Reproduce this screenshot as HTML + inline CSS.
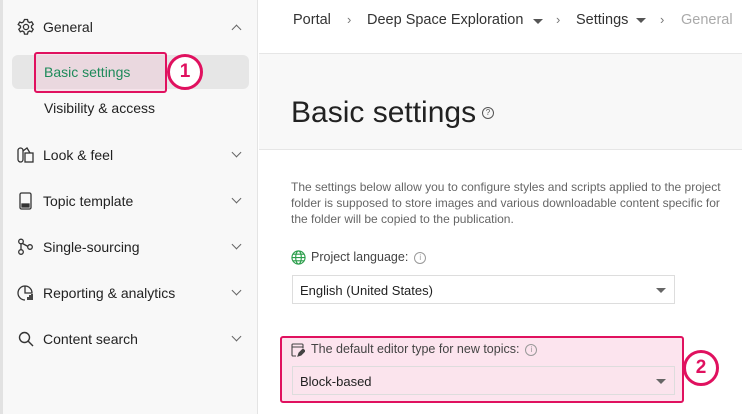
<!DOCTYPE html><html><head><style>
body{margin:0;width:742px;height:414px;overflow:hidden;font-family:"Liberation Sans",sans-serif;background:#fff;position:relative;color:#222}
.a{position:absolute;white-space:nowrap}
.side{position:absolute;left:0;top:0;width:258px;height:414px;background:#f8f8f8;border-right:1px solid #e4e4e4;border-left:3px solid #e2e2e2;box-sizing:border-box}
.it{position:absolute;left:43px;font-size:14px;color:#222}
.ch{position:absolute;left:233px;width:6px;height:6px;border-right:1.3px solid #666;border-bottom:1.3px solid #666;transform:rotate(45deg)}
.ic{position:absolute;left:17px}
.sel{position:absolute;left:292px;width:383px;height:29px;border:1px solid #ddd;background:#fff;box-sizing:border-box;font-size:13px;padding:7px 0 0 7px}
.tri{position:absolute;right:8px;top:12px;border-left:5px solid transparent;border-right:5px solid transparent;border-top:5px solid #666}
.circ{position:absolute;width:30px;height:30px;border:3px solid #e0115f;border-radius:50%;background:#fff;font-weight:bold;font-size:19px;text-align:center;line-height:30px;color:#e0115f}
.inf{display:inline-block;vertical-align:1px;margin-left:6px;width:10px;height:10px;border:1px solid #999;border-radius:50%;font-size:8px;text-align:center;line-height:10px;color:#999}
</style></head><body>
<div class="side"></div>
<svg class="ic" style="top:18px" width="18" height="18" viewBox="0 0 18 18" fill="none" stroke="#333" stroke-width="1.3"><circle cx="9" cy="9" r="2.6"/><path d="M7.5 1.5h3l.5 2.2 1.6.9 2.1-.8 1.5 2.6-1.7 1.5v1.8l1.7 1.5-1.5 2.6-2.1-.8-1.6.9-.5 2.2h-3l-.5-2.2-1.6-.9-2.1.8-1.5-2.6 1.7-1.5V8.1L1.2 6.6l1.5-2.6 2.1.8 1.6-.9z"/></svg>
<div class="it" style="top:19px">General</div>
<div class="ch" style="top:26px;transform:rotate(225deg)"></div>
<div class="a" style="left:12px;top:55px;width:237px;height:34px;background:#e6e6e6;border-radius:6px"></div>
<div class="a" style="left:34px;top:52px;width:129px;height:37px;border:2px solid #e0115f;border-radius:3px;background:rgba(240,190,210,.35)"></div>
<div class="it" style="left:44px;top:64px;color:#1e8a5a">Basic settings</div>
<div class="circ" style="left:167px;top:54px">1</div>
<div class="it" style="left:44px;top:100px">Visibility &amp; access</div>
<svg class="ic" style="top:146px" width="18" height="18" viewBox="0 0 18 18" fill="none" stroke="#333" stroke-width="1.3"><rect x="1" y="2" width="5" height="14" rx="2.5"/><rect x="8" y="7" width="8" height="9"/><path d="M6 5l4-3 3 5"/></svg>
<div class="it" style="top:147px">Look &amp; feel</div><div class="ch" style="top:149px"></div>
<svg class="ic" style="top:192px" width="18" height="18" viewBox="0 0 18 18" fill="none" stroke="#333" stroke-width="1.3"><rect x="3" y="1" width="11" height="16" rx="1.5"/><rect x="5" y="12" width="7" height="3" fill="#333"/></svg>
<div class="it" style="top:193px">Topic template</div><div class="ch" style="top:195px"></div>
<svg class="ic" style="top:238px" width="18" height="18" viewBox="0 0 18 18" fill="none" stroke="#333" stroke-width="1.3"><circle cx="4" cy="3.5" r="2.3"/><circle cx="4" cy="14" r="2.3"/><circle cx="13" cy="9" r="2.3"/><path d="M4 6v5.5M5.5 5.5l5.5 3"/></svg>
<div class="it" style="top:239px">Single-sourcing</div><div class="ch" style="top:241px"></div>
<svg class="ic" style="top:284px" width="18" height="18" viewBox="0 0 18 18" fill="none" stroke="#333" stroke-width="1.3"><path d="M8 2a7 7 0 1 0 0 14M8 2v7h7a7 7 0 0 0-7-7"/><path d="M11 16v-3M13 16v-5M15 16v-6" stroke-width="1.8"/></svg>
<div class="it" style="top:285px">Reporting &amp; analytics</div><div class="ch" style="top:287px"></div>
<svg class="ic" style="top:330px" width="18" height="18" viewBox="0 0 18 18" fill="none" stroke="#333" stroke-width="1.4"><circle cx="7.5" cy="7.5" r="5"/><path d="M11 11l5 5"/></svg>
<div class="it" style="top:331px">Content search</div><div class="ch" style="top:333px"></div>

<div class="a" style="left:259px;top:0;width:483px;height:53px;border-bottom:1px solid #e6e6e6;background:#fff"></div>
<div class="a" style="left:293px;top:12px;font-size:14.5px;color:#333">Portal</div>
<div class="a" style="left:347px;top:12px;font-size:13px;color:#777">›</div>
<div class="a" style="left:367px;top:12px;font-size:14.5px;color:#333">Deep Space Exploration</div>
<div class="a" style="left:533px;top:19px;border-left:5px solid transparent;border-right:5px solid transparent;border-top:5px solid #555"></div>
<div class="a" style="left:556px;top:12px;font-size:13px;color:#777">›</div>
<div class="a" style="left:576px;top:12px;font-size:14.5px;color:#333">Settings</div>
<div class="a" style="left:636px;top:18px;border-left:5px solid transparent;border-right:5px solid transparent;border-top:5px solid #555"></div>
<div class="a" style="left:660px;top:12px;font-size:13px;color:#777">›</div>
<div class="a" style="left:681px;top:12px;font-size:14.5px;color:#aaa">General</div>
<div class="a" style="left:259px;top:54px;width:483px;height:95px;background:#f8f8f8;border-bottom:1px solid #e6e6e6"></div>
<div class="a" style="left:291px;top:96px;font-size:30px;color:#222">Basic settings</div>
<div class="a" style="left:482px;top:107px;width:10px;height:10px;border:1px solid #555;border-radius:50%;font-size:8px;text-align:center;line-height:10px;color:#555">?</div>
<div class="a" style="left:291px;top:179px;font-size:12px;color:#666;line-height:16px">The settings below allow you to configure styles and scripts applied to the project<br>folder is supposed to store images and various downloadable content specific for<br>the folder will be copied to the publication.</div>
<svg class="a" style="left:291px;top:250px" width="15" height="15" viewBox="0 0 16 16" fill="none" stroke="#2a9d4a" stroke-width="1.2"><circle cx="8" cy="8" r="7"/><ellipse cx="8" cy="8" rx="3" ry="7"/><path d="M1 8h14M2 4.5h12M2 11.5h12"/></svg>
<div class="a" style="left:311px;top:250px;font-size:12.5px;color:#444">Project language:<span class="inf">i</span></div>
<div class="sel" style="top:275px">English (United States)<div class="tri"></div></div>
<div class="a" style="left:280px;top:336px;width:400px;height:63px;border:2px solid #e0115f;border-radius:3px;background:#fce4ee"></div>
<svg class="a" style="left:291px;top:343px" width="14" height="14" viewBox="0 0 14 14" fill="none" stroke="#444" stroke-width="1.1"><path d="M12 5V2a1 1 0 0 0-1-1H2a1 1 0 0 0-1 1v10a1 1 0 0 0 1 1h3M1 4h11"/><path d="M7 13l1-3 4-4 2 2-4 4z" fill="#444"/></svg>
<div class="a" style="left:311px;top:342px;font-size:12.5px;color:#444">The default editor type for new topics:<span class="inf">i</span></div>
<div class="sel" style="top:366px;background:#fbe4ed">Block-based<div class="tri"></div></div>
<div class="circ" style="left:683px;top:350px">2</div>
</body></html>
